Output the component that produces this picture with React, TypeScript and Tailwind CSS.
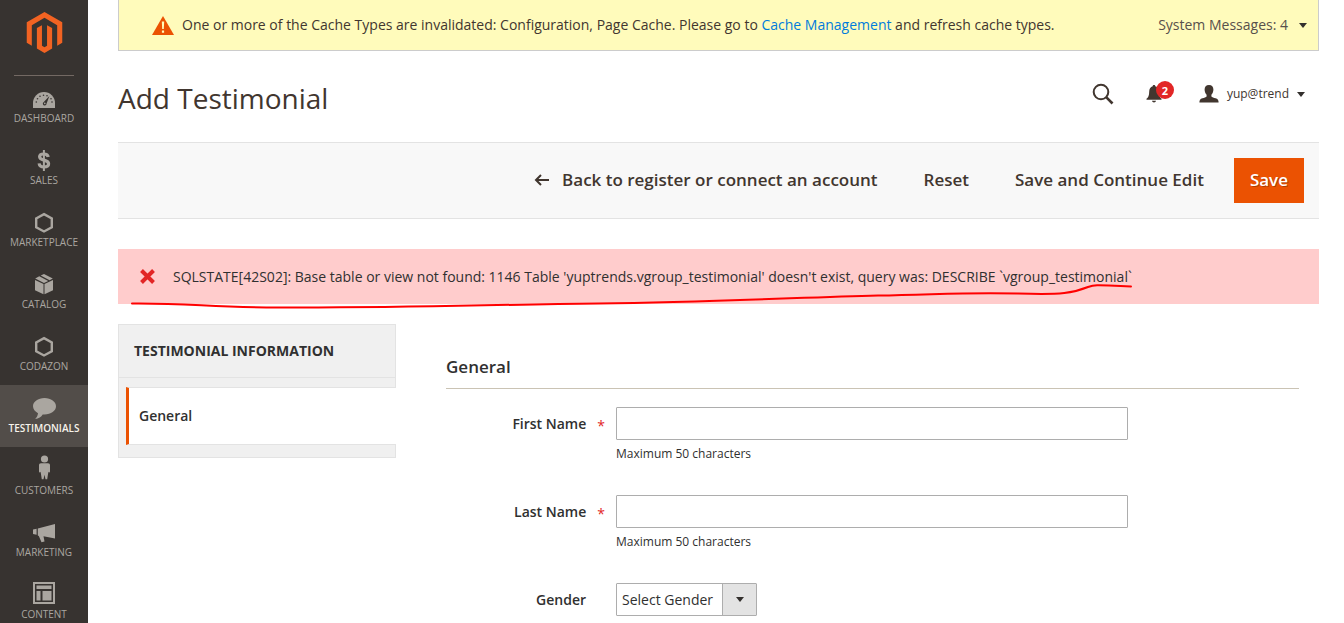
import React, { useState } from "react"

const DashboardIcon = () => (
  <svg width="36" height="28" viewBox="0 0 36 28" fill="currentColor" aria-hidden="true">
    <path d="M7 25v-5a11 11 0 0 1 22 0v5z" />
    <g fill="#373330">
      <path d="M23.4 13l-2.8 7.6a1.9 1.9 0 1 1-2.8-1.6z" />
      <circle cx="10.3" cy="19" r=".8" />
      <circle cx="11.5" cy="15.8" r=".8" />
      <circle cx="14" cy="13.3" r=".8" />
      <circle cx="17.5" cy="12.3" r=".8" />
      <circle cx="21" cy="12.8" r=".8" />
      <circle cx="25" cy="15.8" r=".8" />
      <circle cx="26" cy="19" r=".8" />
    </g>
    <circle cx="18.8" cy="20.4" r=".8" />
  </svg>
)

const SalesIcon = () => (
  <svg width="36" height="28" viewBox="0 0 36 28" fill="none" stroke="currentColor" aria-hidden="true">
    <path strokeWidth="3.2" d="M22.2 12c-.3-2-1.8-3-4.4-3-2.7 0-4.2 1-4.2 2.8 0 4.4 9 2.3 9 7 0 2.2-1.7 3.2-4.6 3.2-3 0-4.6-1.3-4.9-3.6" />
    <path strokeWidth="2" d="M17.9 5v21" />
  </svg>
)

const HexagonIcon = () => (
  <svg width="36" height="28" viewBox="0 0 36 28" fill="none" stroke="currentColor" strokeWidth="2.4" aria-hidden="true">
    <path d="M18 7.1l7.8 4.3v8.8L18 24.5l-7.8-4.3v-8.8z" />
  </svg>
)

const CatalogIcon = () => (
  <svg width="36" height="28" viewBox="0 0 36 28" fill="currentColor" aria-hidden="true">
    <path d="M9 11l8.5 4v10.3L9 21.3zM27 11l-8.500 4v10.300l8.500-4z" />
    <path d="M18 5l8.8 4.6-3.2 1.6-8.9-4.6zM13.3 7.3l8.9 4.6-4.2 2.1-8.8-4.4z" />
  </svg>
)

const TestimonialsIcon = () => (
  <svg width="36" height="28" viewBox="0 0 36 28" fill="currentColor" aria-hidden="true">
    <path d="M18.5 5C12 5 7 8.7 7 13.3c0 2.9 2 5.4 5 6.9-.3 2.3-1.3 4.2-2.8 5.7 3.6-.4 6-2 7.5-4.5.6.1 1.2.1 1.8.1C25 21.5 30 17.9 30 13.3S25 5 18.5 5z" />
  </svg>
)

const CustomersIcon = () => (
  <svg width="36" height="28" viewBox="0 0 36 28" fill="currentColor" aria-hidden="true">
    <circle cx="18.5" cy="4" r="3.6" />
    <path d="M15 8.3h7c1.3 0 2 .8 2 2v6.2c0 1.2-1.3 1.2-1.6.3l-1.2 7.5h-1.7l-1-4.6-1 4.6h-1.7l-1.2-7.5c-.3.9-1.6.9-1.6-.3v-6.2c0-1.2.7-2 2-2z" />
  </svg>
)

const MarketingIcon = () => (
  <svg width="36" height="28" viewBox="0 0 36 28" fill="currentColor" aria-hidden="true">
    <path d="M29 7v14.5l-11.5-2.3 1 5.3-3 .7-2.7-6.3-1-.4v-7zM10.6 11.7v6L7 16.9v-4.4z" />
  </svg>
)

const ContentIcon = () => (
  <svg width="36" height="28" viewBox="0 0 36 28" fill="currentColor" aria-hidden="true">
    <path fillRule="evenodd" d="M7 3h22v22H7zM9 5v18h18V5z" />
    <path d="M10.5 6.5h15V10h-15zM10.5 12h4v9.5h-4zM16.5 12h9v9.5h-9z" />
  </svg>
)

const menu = [
  { name: "Dashboard", Icon: DashboardIcon },
  { name: "Sales", Icon: SalesIcon },
  { name: "Marketplace", Icon: HexagonIcon },
  { name: "Catalog", Icon: CatalogIcon },
  { name: "Codazon", Icon: HexagonIcon },
  { name: "Testimonials", Icon: TestimonialsIcon, active: true },
  { name: "Customers", Icon: CustomersIcon },
  { name: "Marketing", Icon: MarketingIcon },
  { name: "Content", Icon: ContentIcon },
]

const Caret = () => (
  <svg width="8" height="5" viewBox="0 0 8 5" fill="#33302d" aria-hidden="true">
    <path d="M0 0h8L4 5z" />
  </svg>
)

const Sidebar = () => (
  <aside className="sticky top-0 h-screen w-[88px] shrink-0 overflow-hidden bg-[#373330]">
    <a href="#" aria-label="Magento" className="mx-[14px] flex h-[76px] justify-center border-b border-[#736963] pt-3">
      <svg width="41" height="41" viewBox="0 0 24 24" fill="#f26322" aria-hidden="true">
        <path d="M12 24l-4.455-2.572v-12l2.97-1.715v12.001l1.485.902 1.485-.902V7.713l2.971 1.715v12L12 24zM22.391 6v12l-2.969 1.714V7.713L12 3.43 4.574 7.713v12.001L1.609 18V6L12 0l10.391 6z" />
      </svg>
    </a>

    <nav className="-mt-px">
      {menu.map(({ name, Icon, active }) => (
        <a
          key={name}
          href="#"
          className={
            active
              ? "flex h-[62px] flex-col items-center bg-[#524d49] pt-2 text-[#aaa6a0]"
              : "flex h-[62px] flex-col items-center pt-2 text-[#aaa6a0]"
          }
        >
          <Icon />
          <span className={active ? "text-[10px] leading-[14px] font-semibold text-[#f7f3eb] uppercase" : "text-[10px] leading-[14px] uppercase"}>
            {name}
          </span>
        </a>
      ))}
    </nav>
  </aside>
)

type TextFieldProps = {
  id: string
  label: string
  value: string
  onChange: (value: string) => void
}

const TextField = ({ id, label, value, onChange }: TextFieldProps) => (
  <div className="mb-8 flex">
    <label htmlFor={id} className="flex h-[33px] w-[170px] shrink-0 items-center justify-end pr-[11px] font-semibold">
      {label}
      <span className="ml-[11px] pt-1 leading-4 font-normal text-[#e22626]">*</span>
    </label>
    <div className="w-3/5">
      <input
        id={id}
        type="text"
        required
        value={value}
        onChange={(e) => onChange(e.target.value)}
        className="block h-[33px] w-full rounded-[1px] border border-[#adadad] bg-white px-2"
      />
      <p className="mt-[5px] text-xs leading-[18px]">Maximum 50 characters</p>
    </div>
  </div>
)

const App = () => {
  const [ firstName, setFirstName ] = useState("")
  const [ lastName, setLastName ] = useState("")
  const [ gender, setGender ] = useState("")

  return (
    <div className="flex min-h-screen bg-white font-['Open_Sans',sans-serif] text-sm text-[#303030]">
      <Sidebar />

      <div className="min-w-0 flex-1 pr-[25px] pl-[30px]">
        <div className="flex h-[51px] items-center border border-t-0 border-[#cccccc] bg-[#fffbbb] pr-[11px] pl-[33px] text-[#41362f]">
          <svg width="22" height="19" viewBox="0 0 22 19" className="mr-2" aria-hidden="true">
            <path fill="#eb5202" d="M11 0l11 19H0z" />
            <path fill="#fffbbb" d="M9.8 5.5h2.4l-.4 7.5h-1.6zM9.9 14.5h2.2v2.2H9.9z" />
          </svg>
          <p>
            One or more of the Cache Types are invalidated: Configuration, Page Cache. Please go to{" "}
            <a href="#" className="text-[#007bdb]">Cache Management</a> and refresh cache types.
          </p>
          <button type="button" className="ml-auto flex items-center gap-[11px] text-[#57504b]">
            System Messages: 4
            <Caret />
          </button>
        </div>

        <header className="flex items-start justify-between pt-[27px] pr-[14px] pb-6">
          <h1 className="text-[28px] leading-10 text-[#41362f]">Add Testimonial</h1>

          <div className="flex h-8 items-center text-[#41362f]">
            <button type="button" aria-label="Search">
              <svg width="22" height="22" viewBox="0 0 22 22" fill="none" stroke="currentColor" aria-hidden="true">
                <circle cx="9" cy="9" r="7.3" strokeWidth="2" />
                <path d="M14.2 14.2l6.3 6.3" strokeWidth="2.6" />
              </svg>
            </button>
            <button type="button" aria-label="Notifications" className="relative ml-8">
              <svg width="16" height="18" viewBox="0 0 16 18" fill="currentColor" aria-hidden="true">
                <path d="M8 0c.8 0 1.3.5 1.3 1.3 2.4.7 3.5 2.6 3.5 5.2 0 4.2 1 6 2.7 7.2v1H.5v-1c1.7-1.2 2.7-3 2.7-7.2 0-2.6 1.1-4.5 3.5-5.2C6.7.5 7.2 0 8 0zM6 15.7h4c-.2 1-1 1.7-2 1.7s-1.8-.7-2-1.7z" />
              </svg>
              <span className="absolute -top-1 left-2.5 flex h-[18px] w-[18px] items-center justify-center rounded-full bg-[#e22626] text-[11px] leading-none font-bold text-white">
                2
              </span>
            </button>
            <button type="button" className="ml-[37px] flex items-center text-xs">
              <svg width="20" height="18" viewBox="0 0 20 18" fill="currentColor" aria-hidden="true">
                <path d="M10 0c3 0 4.4 1.9 4.4 4.5 0 2.2-.8 4.3-2 5.3v1.7c.6.8 2.4 1.2 4.2 1.8 2.2.7 3 1.8 3 4.2H.4c0-2.400.8-3.500 3-4.200 1.800-.6 3.600-1 4.200-1.800V9.800c-1.200-1-2-3.100-2-5.300C5.600 1.900 7 0 10 0z" />
              </svg>
              <span className="mx-2">yup@trend</span>
              <Caret />
            </button>
          </div>
        </header>

        <div className="flex h-[77px] items-center justify-end border-y border-[#e3e3e3] bg-[#f8f8f8] pr-[15px] text-[17px] leading-6 font-semibold text-[#41362f]">
          <button type="button" className="flex items-center pb-0.5">
            <svg width="16" height="12" viewBox="0 0 16 12" fill="none" stroke="currentColor" strokeWidth="2" className="mr-3" aria-hidden="true">
              <path d="M15 6H2M7 1L2 6l5 5" />
            </svg>
            Back to register or connect an account
          </button>
          <button type="button" className="ml-[46px] pb-0.5">Reset</button>
          <button type="button" className="ml-[46px] pb-0.5">Save and Continue Edit</button>
          <button
            type="button"
            className="ml-[30px] h-[45px] bg-[#eb5202] px-4 pb-0.5 text-white text-shadow-[1px_1px_0_rgba(0,0,0,0.25)]"
          >
            Save
          </button>
        </div>

        <div role="alert" className="relative mt-[30px] flex h-[55px] items-center bg-[#ffcccc] pl-[22px]">
          <svg width="15" height="15" viewBox="0 0 15 15" stroke="#e22626" strokeWidth="4" className="mr-[18px]" aria-hidden="true">
            <path d="M1.5 1.5l12 12M13.5 1.5l-12 12" />
          </svg>
          SQLSTATE[42S02]: Base table or view not found: 1146 Table 'yuptrends.vgroup_testimonial' doesn't exist, query was: DESCRIBE `vgroup_testimonial`
          {/* hand-drawn marker under the message */}
          <svg
            width="1020"
            height="30"
            viewBox="0 0 1020 30"
            fill="none"
            stroke="#ff0000"
            strokeWidth="2"
            strokeLinecap="round"
            className="pointer-events-none absolute top-[34px] left-0"
            aria-hidden="true"
          >
            <path d="M14 20.5C70 20 90 24 160 24.5C300 25 370 21.5 480 20.5C600 19 680 14.5 760 12.5C820 11.5 850 9 900 10.5C945 12 955 10 970 4C980 0.5 985 3 1013 3.5" />
          </svg>
        </div>

        <div className="mt-5 flex items-start">
          <aside className="w-[278px] shrink-0 border border-[#e3e3e3] bg-[#f0f0f0] pb-3">
            <h2 className="border-b border-[#e3e3e3] px-[15px] py-4 leading-5 font-bold uppercase">
              Testimonial Information
            </h2>
            <a
              href="#"
              className="mt-[9px] -mr-px ml-[7px] block border-y border-l-[3px] border-y-[#e3e3e3] border-l-[#eb5202] bg-white py-[18px] pl-2.5 leading-5 font-semibold"
            >
              General
            </a>
          </aside>

          <form className="mr-5 ml-[50px] min-w-0 flex-1" onSubmit={(e) => e.preventDefault()}>
            <h2 className="mb-[18px] border-b border-[#cac3b4] pt-8 pb-[10px] text-[17px] leading-[22px] font-semibold">General</h2>

            <TextField id="first-name" label="First Name" value={firstName} onChange={setFirstName} />
            <TextField id="last-name" label="Last Name" value={lastName} onChange={setLastName} />

            <div className="flex">
              <label htmlFor="gender" className="flex h-[33px] w-[170px] shrink-0 items-center justify-end pr-[30px] font-semibold">
                Gender
              </label>
              <div className="relative">
                <select
                  id="gender"
                  value={gender}
                  onChange={(e) => setGender(e.target.value)}
                  className="block h-[33px] w-[141px] appearance-none rounded-[1px] border border-[#adadad] bg-white pl-[5px]"
                >
                  <option value="">Select Gender</option>
                  <option value="male">Male</option>
                  <option value="female">Female</option>
                </select>
                <span className="pointer-events-none absolute inset-y-px right-px flex w-[34px] items-center justify-center border-l border-[#adadad] bg-[#e3e3e3]">
                  <Caret />
                </span>
              </div>
            </div>
          </form>
        </div>
      </div>
    </div>
  )
}

export default App
